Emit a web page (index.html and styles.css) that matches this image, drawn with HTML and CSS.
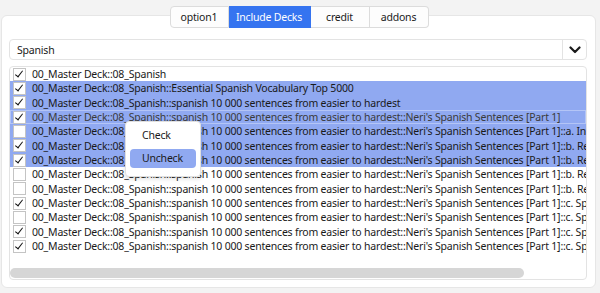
FILE: index.html
```html
<!DOCTYPE html>
<html>
<head>
    <title>Include Decks</title>
    <link rel="stylesheet" href="styles.css">
</head>
<body>
    <div class="tabs">
        <button class="tab">option1</button>
        <button class="tab active">Include Decks</button>
        <button class="tab">credit</button>
        <button class="tab">addons</button>
    </div>
    <div class="panel">
        <div class="combo">
            <span class="combo-text">Spanish</span>
            <span class="combo-arrow">
                <svg width="12" height="8" viewBox="0 0 12 8"><path d="M1.5 1.5 L6 6 L10.5 1.5" fill="none" stroke="#1a1a1a" stroke-width="2.2" stroke-linecap="round" stroke-linejoin="round"/></svg>
            </span>
        </div>
        <div class="list">
            <div class="rows">
                <div class="row"><span class="box on"></span><span class="label">00_Master Deck::08_Spanish</span></div>
                <div class="row sel"><span class="box on"></span><span class="label">00_Master Deck::08_Spanish::Essential Spanish Vocabulary Top 5000</span></div>
                <div class="row sel"><span class="box on"></span><span class="label">00_Master Deck::08_Spanish::spanish 10 000 sentences from easier to hardest</span></div>
                <div class="row sel focus"><span class="box on"></span><span class="label">00_Master Deck::08_Spanish::spanish 10 000 sentences from easier to hardest::Neri's Spanish Sentences [Part 1]</span></div>
                <div class="row sel"><span class="box"></span><span class="label">00_Master Deck::08_Spanish::spanish 10 000 sentences from easier to hardest::Neri's Spanish Sentences [Part 1]::a. Introduction</span></div>
                <div class="row sel"><span class="box on"></span><span class="label">00_Master Deck::08_Spanish::spanish 10 000 sentences from easier to hardest::Neri's Spanish Sentences [Part 1]::b. Review</span></div>
                <div class="row sel"><span class="box on"></span><span class="label">00_Master Deck::08_Spanish::spanish 10 000 sentences from easier to hardest::Neri's Spanish Sentences [Part 1]::b. Review</span></div>
                <div class="row"><span class="box"></span><span class="label">00_Master Deck::08_Spanish::spanish 10 000 sentences from easier to hardest::Neri's Spanish Sentences [Part 1]::b. Review</span></div>
                <div class="row"><span class="box"></span><span class="label">00_Master Deck::08_Spanish::spanish 10 000 sentences from easier to hardest::Neri's Spanish Sentences [Part 1]::b. Review</span></div>
                <div class="row"><span class="box on"></span><span class="label">00_Master Deck::08_Spanish::spanish 10 000 sentences from easier to hardest::Neri's Spanish Sentences [Part 1]::c. Speaking</span></div>
                <div class="row"><span class="box"></span><span class="label">00_Master Deck::08_Spanish::spanish 10 000 sentences from easier to hardest::Neri's Spanish Sentences [Part 1]::c. Speaking</span></div>
                <div class="row"><span class="box on"></span><span class="label">00_Master Deck::08_Spanish::spanish 10 000 sentences from easier to hardest::Neri's Spanish Sentences [Part 1]::c. Speaking</span></div>
                <div class="row"><span class="box on"></span><span class="label">00_Master Deck::08_Spanish::spanish 10 000 sentences from easier to hardest::Neri's Spanish Sentences [Part 1]::c. Speaking</span></div>
            </div>
            <div class="hscroll"><div class="thumb"></div></div>
        </div>
    </div>

    <div class="menu">
        <div class="menu-item">Check</div>
        <div class="menu-item hover">Uncheck</div>
    </div>
</body>
</html>
```

FILE: styles.css
```css
body {
    background-color: #f3f3f3;
    color: #1a1a1a;
    font-family: "Noto Sans", "Open Sans", sans-serif;
    font-size: 10.5px;
    letter-spacing: -0.2px;
    margin: 0;
    padding: 6px 4px 0 1px;
}
.tabs {
    display: flex;
    justify-content: center;
    position: relative;
    z-index: 1;
    height: 22px;
    margin-left: 1px;
}
.tab {
    font-family: inherit;
    font-size: 10.5px;
    letter-spacing: -0.2px;
    color: #1a1a1a;
    background: #fdfdfd;
    border: 1px solid #dcdcdc;
    border-left: none;
    padding: 0;
    height: 22px;
    width: 59px;
}
.tab:first-child {
    border-left: 1px solid #dcdcdc;
    border-radius: 4px 0 0 4px;
}
.tab:last-child {
    border-radius: 0 4px 4px 0;
}
.tab.active {
    width: 82px;
    background: #3574f0;
    border-color: #3574f0;
    color: white;
}
.panel {
    background: white;
    border: 1px solid #e6e6e6;
    border-radius: 6px;
    margin-top: -13px;
    height: 273px;
    box-sizing: border-box;
    padding: 23px 7px 7px 7px;
    display: flex;
    flex-direction: column;
}
.combo {
    display: flex;
    align-items: center;
    height: 19px;
    border: 1px solid #e3e3e3;
    border-radius: 4px;
    margin-right: 1px;
}
.combo-text {
    flex: 1;
    padding-left: 7px;
}
.combo-arrow {
    width: 23px;
    height: 100%;
    border-left: 1px solid #e3e3e3;
    display: flex;
    align-items: center;
    justify-content: center;
}
.list {
    margin-top: 6px;
    flex: 1;
    border: 1px solid #e3e3e3;
    border-radius: 4px;
    display: flex;
    flex-direction: column;
    overflow: hidden;
    margin-right: 1px;
}
.row {
    display: flex;
    align-items: center;
    height: 14.33px;
    padding-left: 3px;
    white-space: nowrap;
    box-sizing: border-box;
}
.row.sel {
    background: #90a9f1;
}
.row.focus {
    box-shadow: inset 0 0 0 1px #b4c5f6;
    color: #3a3a3a;
}
.box {
    flex: none;
    width: 11px;
    height: 11px;
    border: 1px solid #c4c4c4;
    background: white;
    margin-right: 6px;
    position: relative;
}
.box.on::after {
    content: "";
    position: absolute;
    left: 3px;
    top: 0px;
    width: 3px;
    height: 7px;
    border: solid #111;
    border-width: 0 1.6px 1.6px 0;
    transform: rotate(38deg);
}
.hscroll {
    margin-top: auto;
    margin-bottom: 1px;
}
.thumb {
    width: 514px;
    height: 10px;
    background: #d6d6d6;
    border-radius: 5px;
}
.menu {
    position: absolute;
    left: 125px;
    top: 121px;
    width: 76px;
    box-sizing: border-box;
    background: white;
    border: 1px solid #e0e0e0;
    border-radius: 4px;
    box-shadow: 0 2px 4px rgba(0, 0, 0, 0.12);
    padding: 4px 4px 8px 4px;
}
.menu-item {
    height: 19px;
    line-height: 19px;
    padding-left: 12px;
    border-radius: 4px;
}
.menu-item + .menu-item {
    margin-top: 4px;
}
.menu-item.hover {
    background: #90a9f1;
}
```
